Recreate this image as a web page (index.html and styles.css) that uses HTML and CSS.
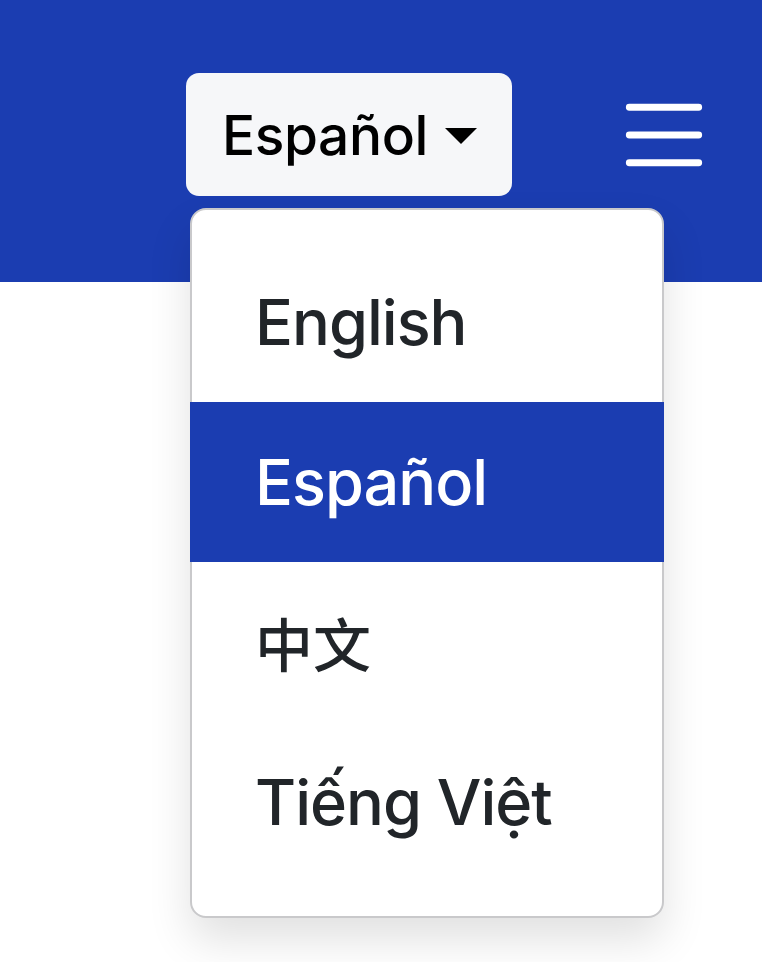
FILE: index.html
```html
<!DOCTYPE html>
<html lang="es">
<head>
<meta charset="utf-8">
<title>Idioma</title>
<link rel="stylesheet" href="styles.css">
</head>
<body>
<header class="topbar">
  <div class="lang">
    <button class="lang-btn" type="button">Español<span class="caret"></span></button>
    <ul class="menu">
      <li class="item">English</li>
      <li class="item active">Español</li>
      <li class="item cjk">中文</li>
      <li class="item">Tiếng Việt</li>
    </ul>
  </div>
  <button class="toggler" type="button" aria-label="Menu">
    <svg viewBox="0 0 30 30" width="104" height="104"><path d="M5 7h20M5 15h20M5 23h20" stroke="#fff" stroke-width="2" stroke-linecap="round" fill="none"/></svg>
  </button>
</header>
</body>
</html>
```
FILE: styles.css
```css
html, body {
  margin: 0;
  padding: 0;
  background: #ffffff;
  font-family: "Inter", "Liberation Sans", "Noto Sans CJK SC", sans-serif;
}
body {
  min-height: 962px;
}
.topbar {
  box-sizing: border-box;
  height: 282px;
  background: #1b3db1;
  display: flex;
  justify-content: flex-end;
  align-items: flex-start;
  padding: 73px 46px 0 0;
  gap: 100px;
}
.lang {
  position: relative;
}
.lang-btn {
  display: flex;
  align-items: center;
  box-sizing: border-box;
  width: 326px;
  height: 123px;
  padding: 0 0 0 36px;
  border: 0;
  border-radius: 13px;
  background: #f6f7f9;
  color: #000;
  font-family: inherit;
  font-weight: 500;
  font-size: 55px;
  letter-spacing: -0.4px;
  line-height: 84px;
}
.caret {
  display: inline-block;
  margin-left: 17px;
  margin-top: 2px;
  width: 0;
  height: 0;
  border-top: 16px solid #000;
  border-left: 16px solid transparent;
  border-right: 16px solid transparent;
}
.menu {
  position: absolute;
  top: 135px;
  left: 4px;
  width: 474px;
  box-sizing: border-box;
  margin: 0;
  padding: 32px 0 34px;
  list-style: none;
  background: #fff;
  border: 2px solid #c9c9cb;
  border-radius: 16px;
  box-shadow: 0 22px 44px rgba(0, 0, 0, 0.12);
}
.item {
  height: 160px;
  display: flex;
  align-items: center;
  padding-left: 63px;
  font-size: 63px;
  font-weight: 500;
  letter-spacing: -1px;
  color: #212529;
}
.item.active {
  background: #1b3db1;
  color: #fff;
  margin: 0 -2px;
  padding-left: 65px;
}
.item.cjk {
  font-family: "Noto Sans CJK SC", sans-serif;
  font-size: 58px;
  letter-spacing: 0;
}
.toggler {
  margin-top: 10px;
  padding: 0;
  border: 0;
  background: transparent;
  width: 104px;
  height: 104px;
}
.toggler svg {
  display: block;
}
```
